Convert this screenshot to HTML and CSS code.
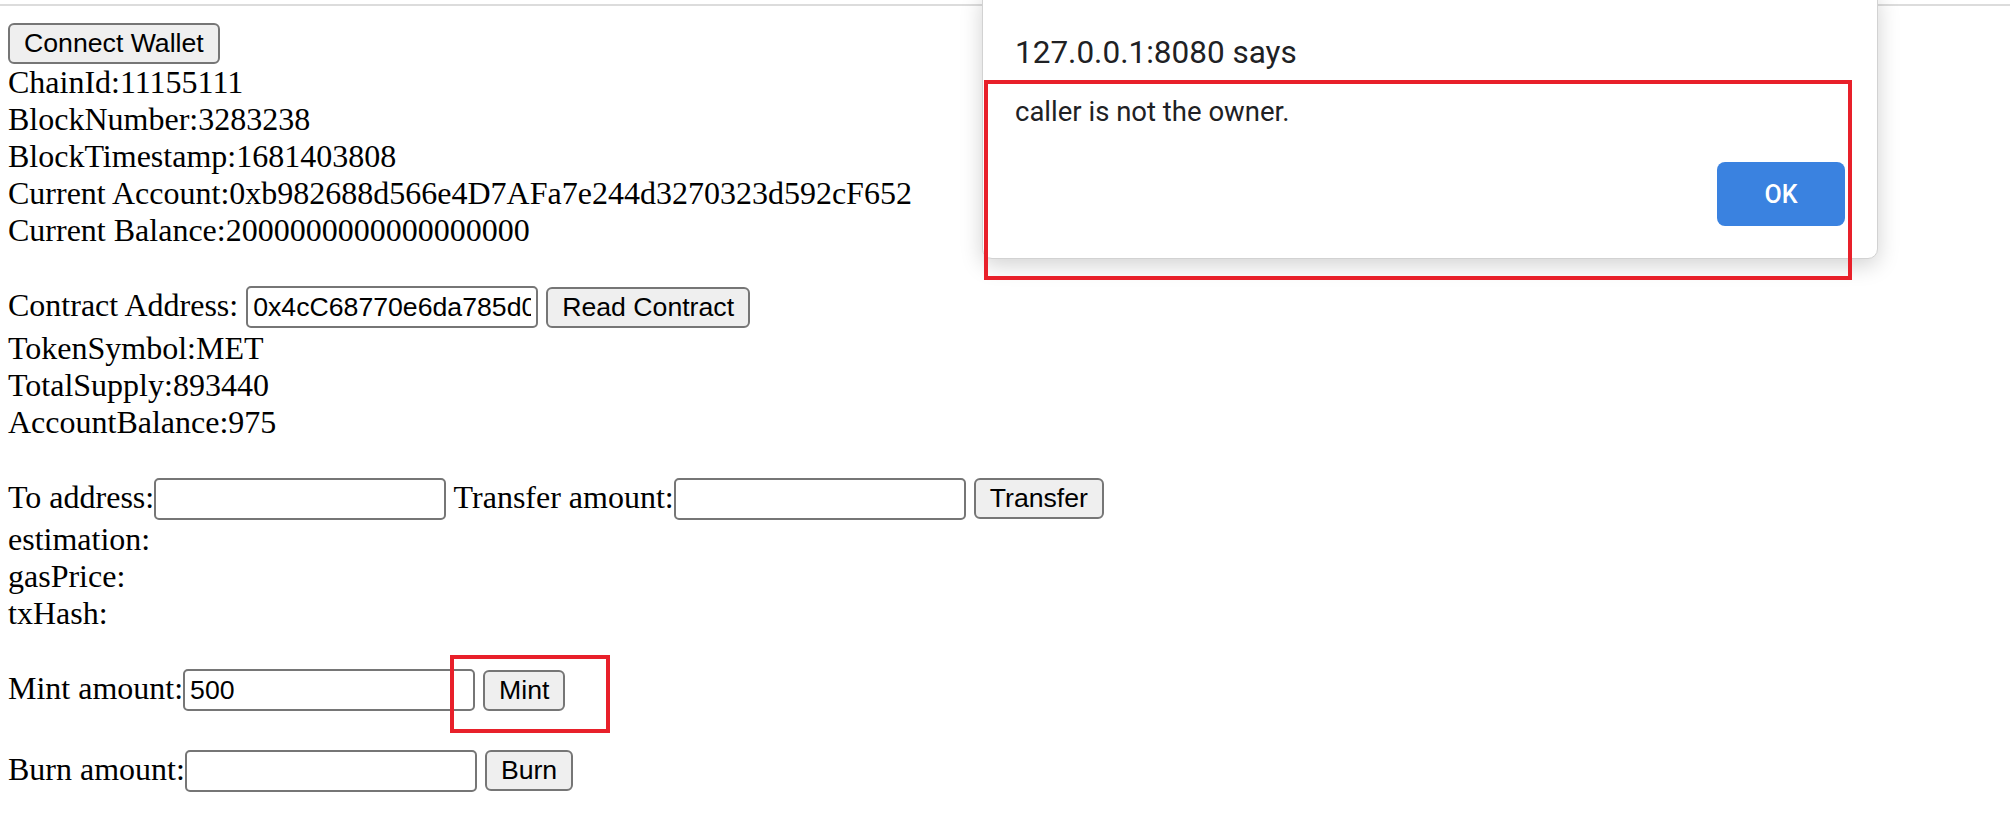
FILE: index.html
```html
<!DOCTYPE html>
<html lang="en">
<head>
<meta charset="utf-8">
<title>Token DApp</title>
<link rel="stylesheet" href="styles.css">
</head>
<body>
<div class="chrome-edge"></div>
<main class="page">
  <button class="btn">Connect Wallet</button>
  <div>ChainId:11155111</div>
  <div>BlockNumber:3283238</div>
  <div>BlockTimestamp:1681403808</div>
  <div>Current Account:0xb982688d566e4D7AFa7e244d3270323d592cF652</div>
  <div>Current Balance:2000000000000000000</div>
  <br>
  <div class="row">Contract Address: <input class="field" type="text" value="0x4cC68770e6da785d0E4f"> <button class="btn">Read Contract</button></div>
  <div>TokenSymbol:MET</div>
  <div>TotalSupply:893440</div>
  <div>AccountBalance:975</div>
  <br>
  <div class="row">To address:<input class="field" type="text"> Transfer amount:<input class="field" type="text"> <button class="btn">Transfer</button></div>
  <div>estimation:</div>
  <div>gasPrice:</div>
  <div>txHash:</div>
  <br>
  <div class="row">Mint amount:<input class="field" type="text" value="500"> <button class="btn">Mint</button></div>
  <br>
  <div class="row">Burn amount:<input class="field" type="text"> <button class="btn">Burn</button></div>
</main>

<div class="dialog" role="alertdialog">
  <div class="dialog-title">127.0.0.1:8080 says</div>
  <div class="dialog-msg">caller is not the owner.</div>
  <div class="dialog-actions"><button class="ok-btn">OK</button></div>
</div>
<div class="mark mark-dialog"></div>
<div class="mark mark-mint"></div>
</body>
</html>
```

FILE: styles.css
```css
html, body {
  margin: 0;
  padding: 0;
  background: #ffffff;
}

body {
  font-family: "Liberation Serif", "Times New Roman", serif;
  font-size: 32px;
  color: #000000;
  position: relative;
  overflow: hidden;
  height: 820px;
}

.chrome-edge {
  height: 4px;
  border-bottom: 2px solid #dcdcdc;
}

.page {
  padding: 17px 0 0 8px;
}

.row {
  padding-bottom: 1.5px;
}

.btn {
  font-family: "Liberation Sans", Arial, sans-serif;
  font-size: 26.67px;
  color: #000000;
  background: #efefef;
  border: 2px solid #767676;
  border-radius: 6px;
  height: 41px;
  padding: 0 14px;
  margin: 0;
}

.field {
  font-family: "Liberation Sans", Arial, sans-serif;
  font-size: 26.67px;
  color: #000000;
  background: #ffffff;
  border: 2px solid #767676;
  border-radius: 5px;
  box-sizing: border-box;
  width: 292px;
  height: 42px;
  padding: 0 5px;
  margin: 0;
}

/* Alert dialog */
.dialog {
  position: absolute;
  top: -10px;
  left: 982px;
  width: 896px;
  height: 269px;
  box-sizing: border-box;
  background: #ffffff;
  border-radius: 10px;
  border: 1px solid #d2d2d2;
  box-shadow: 0 6px 22px rgba(0, 0, 0, 0.18);
  padding: 0 32px 0 32px;
  font-family: Roboto, "Noto Sans", sans-serif;
  color: #202124;
  display: flex;
  flex-direction: column;
}

.dialog-title {
  font-size: 31.5px;
  margin-top: 42px;
  line-height: 40px;
}

.dialog-msg {
  font-size: 27.5px;
  margin-top: 22px;
  line-height: 34px;
}

.dialog-actions {
  display: flex;
  justify-content: flex-end;
  margin-top: 33px;
}

.ok-btn {
  font-family: Roboto, "Noto Sans", sans-serif;
  font-size: 25px;
  font-weight: 500;
  color: #ffffff;
  background: #3a82e0;
  border: none;
  border-radius: 8px;
  width: 128px;
  height: 64px;
  margin: 0;
}

/* Red annotation rectangles */
.mark {
  position: absolute;
  border: 4px solid #e8202a;
  box-sizing: border-box;
}

.mark-dialog {
  left: 984px;
  top: 80px;
  width: 868px;
  height: 200px;
}

.mark-mint {
  left: 450px;
  top: 655px;
  width: 160px;
  height: 78px;
}
```
